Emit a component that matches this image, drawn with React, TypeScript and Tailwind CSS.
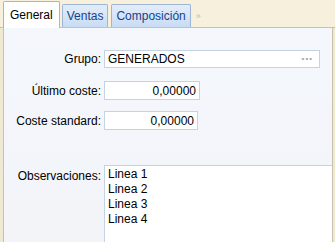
export default function App() {
  const font = { fontFamily: '"Liberation Sans", Arial, sans-serif' };
  return (
    <div
      className="w-[335px] h-[242px] overflow-hidden bg-[#efe8d3] flex flex-col text-[12px] text-black"
      style={font}
    >
      {/* tab strip */}
      <div className="h-[28px] flex items-end pl-[3px] pr-[3px] bg-[#f7f0dc] border-b border-[#c9c3ae] shrink-0">
        <div className="h-[27px] px-[6px] flex items-center bg-white border border-b-0 border-[#b9b5a6] rounded-t-[2px] -mb-px relative z-10">
          General
        </div>
        <div className="ml-[2px] h-[23px] px-[4px] flex items-center text-[#15428b] bg-gradient-to-b from-[#e3edfa] to-[#c9dcf4] border border-b-0 border-[#9db6d6] rounded-t-[2px]">
          Ventas
        </div>
        <div className="ml-[3px] h-[23px] px-[4px] flex items-center text-[#15428b] bg-gradient-to-b from-[#e3edfa] to-[#c9dcf4] border border-b-0 border-[#9db6d6] rounded-t-[2px]">
          Composición
        </div>
        <span className="ml-[5px] mb-[4px] text-[9px] text-[#c0bcae]">»</span>
      </div>

      {/* panel */}
      <div className="flex-1 ml-[3px] mr-[2px] border-l border-r border-b border-[#c9c3ae] bg-gradient-to-b from-[#f4f7fc] to-[#f2f4f8] pt-[22px]">
        <div className="flex items-center h-[18px]">
          <div className="w-[100px] text-right pr-[3px]">Grupo:</div>
          <div className="w-[216px] h-[18px] bg-white border border-[#c3d2e4] flex items-center pl-[3px] pr-[6px]">
            <span className="flex-1">GENERADOS</span>
            <span className="text-[8px] text-[#9aa6b4] tracking-[1px]">•••</span>
          </div>
        </div>
        <div className="flex items-center h-[19px] mt-[13px]">
          <div className="w-[100px] text-right pr-[3px]">Último coste:</div>
          <div className="w-[96px] h-[19px] bg-white border border-[#c3d2e4] flex items-center justify-end pr-[3px]">
            0,00000
          </div>
        </div>
        <div className="flex items-center h-[19px] mt-[11px]">
          <div className="w-[100px] text-right pr-[3px]">Coste standard:</div>
          <div className="w-[94px] h-[19px] bg-white border border-[#c3d2e4] flex items-center justify-end pr-[3px]">
            0,00000
          </div>
        </div>
        <div className="flex mt-[35px]">
          <div className="w-[100px] text-right pr-[3px] pt-[2px]">Observaciones:</div>
          <div className="flex-1 h-[80px] bg-white border border-[#c3d2e4] border-r-0 pl-[3px] pt-[1px] leading-[15px]">
            <div>Linea 1</div>
            <div>Linea 2</div>
            <div>Linea 3</div>
            <div>Linea 4</div>
          </div>
        </div>
      </div>
    </div>
  );
}
